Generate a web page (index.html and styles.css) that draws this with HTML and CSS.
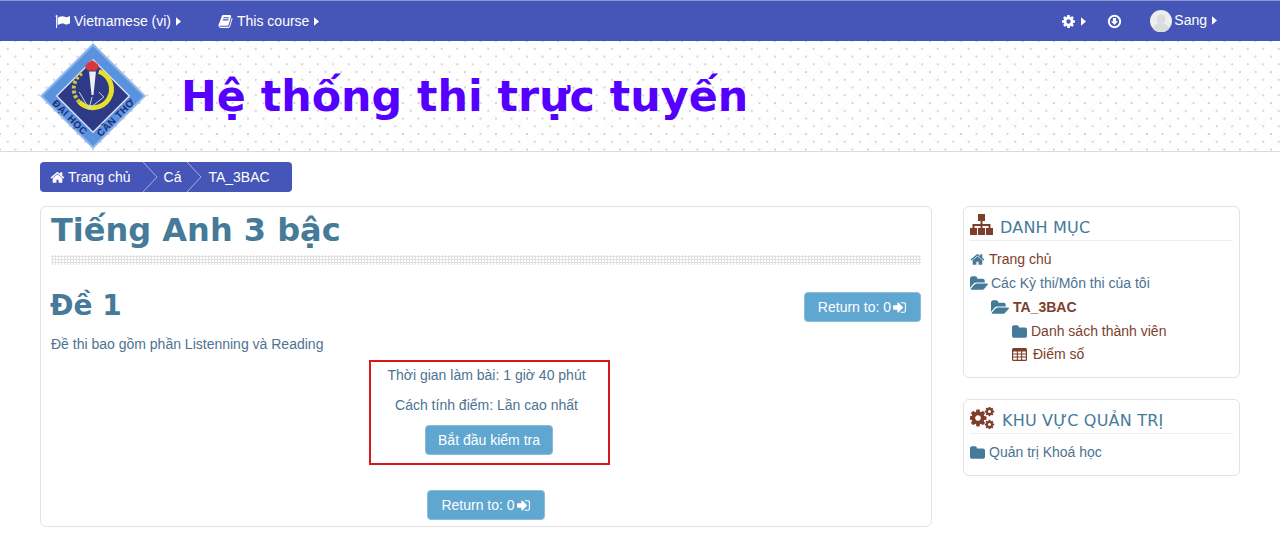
FILE: index.html
```html
<!DOCTYPE html>
<html lang="vi">
<head>
    <meta charset="UTF-8">
    <meta name="viewport" content="width=device-width, initial-scale=1.0">
    <title>Tiếng Anh 3 bậc</title>
    <link rel="stylesheet" href="styles.css">
</head>
<body>
    <svg class="icon-defs" width="0" height="0">
        <defs>
            <symbol id="i-flag" viewBox="0 0 1792 1792"><path d="M320 256q0 72-64 110v1266q0 13-9.500 22.500t-22.500 9.500h-64q-13 0-22.500-9.500t-9.500-22.500v-1266q-64-38-64-110 0-53 37.500-90.500t90.500-37.500 90.500 37.500 37.500 90.500zm1472 64v763q0 25-12.500 38.500t-39.500 27.500q-215 116-369 116-61 0-123.500-22t-108.500-48-115.500-48-142.500-22q-192 0-464 146-17 9-33 9-26 0-45-19t-19-45v-742q0-32 31-55 21-14 79-43 236-120 421-120 107 0 200 29t219 88q38 19 88 19 54 0 117.500-21t110-47 88-47 54.500-21q26 0 45 19t19 45z"/></symbol>
            <symbol id="i-book" viewBox="0 0 1792 1792"><path d="M1703 478q40 57 18 129l-275 906q-19 64-76.500 107.500t-122.500 43.500h-923q-77 0-148.500-53.500t-99.500-131.500q-24-67-2-127 0-4 3-27t4-37q1-8-3-21.500t-3-19.500q2-11 8-21t16.500-23.500 16.500-23.500q23-38 45-91.500t30-91.500q3-10 .5-30t-.5-28q3-11 17-28t17-23q21-36 42-92t25-90q1-9-2.500-32t.5-28q4-13 22-30.500t22-22.500q19-26 42.500-84.500t27.500-96.500q1-8-3-25.500t-2-26.500q2-8 9-18t18-23 17-21q8-12 16.500-30.500t15-35 16-36 19.500-32 26.500-23.500 36-11.500 47.500 5.500l-1 3q38-9 51-9h761q74 0 114 56t18 130l-274 906q-36 119-71.500 153.500t-128.500 34.500h-869q-27 0-38 15-11 16-1 43 24 70 144 70h923q29 0 56-15.500t35-41.500l300-987q7-22 5-57 38 15 59 43zm-1064 2q-4 13 2 22.500t20 9.500h608q13 0 25.500-9.500t16.500-22.500l21-64q4-13-2-22.500t-20-9.500h-608q-13 0-25.500 9.500t-16.500 22.500zm-83 256q-4 13 2 22.500t20 9.500h608q13 0 25.500-9.500t16.500-22.500l21-64q4-13-2-22.500t-20-9.500h-608q-13 0-25.500 9.500t-16.500 22.500z"/></symbol>
            <symbol id="i-caret" viewBox="0 0 6 10"><path d="M0 0l6 5-6 5z"/></symbol>
            <symbol id="i-gear" viewBox="0 0 1792 1792"><path d="M1152 896q0-106-75-181t-181-75-181 75-75 181 75 181 181 75 181-75 75-181zm512-109v222q0 12-8 23t-20 13l-185 28q-19 54-39 91 35 50 107 138 10 12 10 25t-9 23q-27 37-99 108t-94 71q-12 0-26-9l-138-108q-44 23-91 38-16 136-29 186-7 28-36 28h-222q-14 0-24.500-8.500t-11.500-21.500l-28-184q-49-16-90-37l-141 107q-10 9-25 9-14 0-25-11-126-114-165-168-7-10-7-23 0-12 8-23 15-21 51-66.500t54-70.500q-27-50-41-99l-183-27q-13-2-21-12.500t-8-23.500v-222q0-12 8-23t19-13l186-28q14-46 39-92-40-57-107-138-10-12-10-24 0-10 9-23 26-36 98.500-107.500t94.500-71.500q13 0 26 10l138 107q44-23 91-38 16-136 29-186 7-28 36-28h222q14 0 24.500 8.500t11.500 21.500l28 184q49 16 90 37l142-107q9-9 24-9 13 0 25 10 129 119 165 170 7 8 7 22 0 12-8 23-15 21-51 66.500t-54 70.500q26 50 41 98l183 28q13 2 21 12.500t8 23.500z"/></symbol>
            <symbol id="i-home" viewBox="0 0 1792 1792"><path d="M1472 992v480q0 26-19 45t-45 19h-384v-384h-256v384h-384q-26 0-45-19t-19-45v-480q0-1 .5-3t.5-3l575-474 575 474q1 2 1 6zm223-69l-62 74q-8 9-21 11h-3q-13 0-21-7l-692-577-692 577q-12 8-24 7-13-2-21-11l-62-74q-8-10-7-23.500t11-21.500l719-599q32-26 76-26t76 26l244 204v-195q0-14 9-23t23-9h192q14 0 23 9t9 23v408l219 182q10 8 11 21.500t-7 23.500z"/></symbol>
            <symbol id="i-signin" viewBox="0 0 1792 1792"><path d="M1312 896q0 26-19 45l-544 544q-19 19-45 19t-45-19-19-45v-288h-448q-26 0-45-19t-19-45v-384q0-26 19-45t45-19h448v-288q0-26 19-45t45-19 45 19l544 544q19 19 19 45zm352-352v704q0 119-84.500 203.500t-203.500 84.500h-320q-13 0-22.500-9.500t-9.500-22.500q0-4-1-20t-.5-26.500 3-23.500 10-19.500 20.500-6.500h320q66 0 113-47t47-113v-704q0-66-47-113t-113-47h-288l-11.500-1-11.500-3-8-5.500-7-9-2-13.500q0-4-1-20t-.5-26.500 3-23.500 10-19.500 20.500-6.500h320q119 0 203.500 84.500t84.500 203.500z"/></symbol>
            <symbol id="i-folder" viewBox="0 0 1664 1408"><path d="M1664 480v704q0 92-66 158t-158 66h-1216q-92 0-158-66t-66-158v-960q0-92 66-158t158-66h320q92 0 158 66t66 158v32h672q92 0 158 66t66 158z"/></symbol>
            <symbol id="i-folder-open" viewBox="0 0 1879 1408"><path d="M1879 824q0 31-31 66l-336 396q-43 51-120.500 86.500t-143.500 35.500h-1088q-34 0-60.500-13t-26.500-43q0-31 31-66l336-396q43-51 120.500-86.500t143.500-35.500h1088q34 0 60.500 13t26.500 43zm-343-344v160h-832q-94 0-197 47.500t-164 119.500l-337 396-5 6q0-4-.5-12.500t-.500-12.500v-960q0-92 66-158t158-66h320q92 0 158 66t66 158v32h544q92 0 158 66t66 158z"/></symbol>
            <symbol id="i-sitemap" viewBox="0 0 23 21"><path d="M8 0h7v7h-2.500v3h8v4h2.500v7h-7v-7h2.500v-2h-6v2h2.500v7h-7v-7h2.500v-2h-6v2h2.500v7h-7v-7h2.500v-4h8v-3h-2.500z"/></symbol>
            <symbol id="i-table" viewBox="0 0 15 13"><path fill-rule="evenodd" d="M1.500 0h12a1.500 1.500 0 0 1 1.500 1.500v10a1.500 1.500 0 0 1-1.500 1.500h-12a1.500 1.500 0 0 1-1.500-1.500v-10a1.500 1.500 0 0 1 1.500-1.500zm-.3 3.500v2h3.600v-2zm4.700 0v2h3.200v-2zm4.300 0v2h3.600v-2zm-9 3v2h3.600v-2zm4.700 0v2h3.200v-2zm4.300 0v2h3.600v-2zm-9 3v2.300h3.600v-2.300zm4.700 0v2.300h3.200v-2.300zm4.300 0v2.300h3.600v-2.300z"/></symbol>
        </defs>
    </svg>

    <nav class="topbar">
        <div class="topbar-group">
            <a class="top-link"><svg class="icon icon-15"><use href="#i-flag"/></svg>Vietnamese (vi)<svg class="caret"><use href="#i-caret"/></svg></a>
            <a class="top-link"><svg class="icon icon-15"><use href="#i-book"/></svg>This course<svg class="caret"><use href="#i-caret"/></svg></a>
        </div>
        <div class="topbar-group topbar-right">
            <a class="top-link top-gear"><svg class="icon icon-15"><use href="#i-gear"/></svg><svg class="caret"><use href="#i-caret"/></svg></a>
            <a class="top-link top-download">
                <svg class="icon icon-15" viewBox="0 0 14 14"><circle cx="7" cy="7" r="5.300" fill="none" stroke="#fff" stroke-width="1.800"/><path d="M5.500 3.800h3v3h1.800l-3.300 3.400-3.300-3.400h1.800z" fill="#fff"/></svg>
            </a>
            <a class="top-link top-user">
                <svg class="avatar" viewBox="0 0 22 22"><circle cx="11" cy="11" r="11" fill="#eeeeee"/><circle cx="11" cy="9" r="4.500" fill="#dcdcdc"/><path d="M3 19c1-5 5-6 8-6s7 1 8 6a11 11 0 0 1-16 0z" fill="#dcdcdc"/></svg>
                <span class="user-name">Sang<svg class="caret"><use href="#i-caret"/></svg></span>
            </a>
        </div>
    </nav>

    <header class="site-header">
        <svg class="logo" viewBox="0 0 108 108">
            <path d="M54 0l54 54-54 54-54-54z" fill="#8fb6ee"/>
            <path d="M54 3l51 51-51 51-51-51z" fill="#5b92de"/>
            <path d="M54 17l37 37-37 37-37-37z" fill="#2e3a86" stroke="#d5e0f4" stroke-width="1.500"/>
            <path d="M40 60a19 19 0 0 1 4-30" fill="none" stroke="#c9c64a" stroke-width="4" stroke-dasharray="3 2"/>
            <path d="M60 29a19 19 0 1 1-20 31" fill="none" stroke="#e6e02a" stroke-width="5"/>
            <path d="M46 25c0-3 2-3 3-6 1 2 2 0 4-2 1 2 3 2 4 3 2 1 3 3 3 5l-3 3h-8z" fill="#d9363e"/>
            <path d="M50 29h7l-2.500 24h-2z" fill="#eef0f8"/>
            <path d="M40 50l10 17 15-12-5-5M50 67l3-12" fill="none" stroke="#cfd6ee" stroke-width="1"/>
            <text class="logo-text" transform="translate(12 62) rotate(45)">ĐẠI HỌC</text>
            <text class="logo-text" transform="translate(62 96) rotate(-45)">CẦN THƠ</text>
        </svg>
        <div class="site-title">Hệ thống thi trực tuyến</div>
    </header>

    <div class="crumbs">
        <a class="crumb"><svg class="icon crumb-home"><use href="#i-home"/></svg>Trang chủ</a>
        <svg class="crumb-sep" viewBox="0 0 15 30"><path d="M0 0l14 15-14 15" fill="none" stroke="#a7afe0"/></svg>
        <a class="crumb">Cá</a>
        <svg class="crumb-sep" viewBox="0 0 15 30"><path d="M0 0l14 15-14 15" fill="none" stroke="#a7afe0"/></svg>
        <a class="crumb">TA_3BAC</a>
    </div>

    <div class="layout">
        <main class="card main-card">
            <h1 class="course-title">Tiếng Anh 3 bậc</h1>
            <div class="dots"></div>
            <div class="quiz-head">
                <h2 class="quiz-title">Đề 1</h2>
                <a class="button">Return to: 0<svg class="icon icon-15"><use href="#i-signin"/></svg></a>
            </div>
            <p class="intro">Đề thi bao gồm phần Listenning và Reading</p>
            <div class="quiz-box">
                <p>Thời gian làm bài: 1 giờ 40 phút</p>
                <p>Cách tính điểm: Lần cao nhất</p>
                <a class="button button-start">Bắt đầu kiểm tra</a>
            </div>
            <div class="quiz-foot">
                <a class="button">Return to: 0<svg class="icon icon-15"><use href="#i-signin"/></svg></a>
            </div>
        </main>

        <aside class="sidebar">
            <section class="card block">
                <h3 class="block-title"><svg class="icon icon-sitemap"><use href="#i-sitemap"/></svg>DANH MỤC</h3>
                <ul class="tree">
                    <li><svg class="icon icon-home"><use href="#i-home"/></svg><a class="link">Trang chủ</a></li>
                    <li class="tight"><svg class="icon icon-open"><use href="#i-folder-open"/></svg>Các Kỳ thi/Môn thi của tôi</li>
                    <li class="lvl-1"><svg class="icon icon-open"><use href="#i-folder-open"/></svg><a class="link current">TA_3BAC</a></li>
                    <li class="lvl-2"><svg class="icon icon-folder"><use href="#i-folder"/></svg><a class="link">Danh sách thành viên</a></li>
                    <li class="lvl-2 grades"><svg class="icon icon-table"><use href="#i-table"/></svg><a class="link">Điểm số</a></li>
                </ul>
            </section>
            <section class="card block">
                <h3 class="block-title">
                    <svg class="icon icon-cogs" viewBox="0 0 25 22">
                        <use href="#i-gear" x="-2" y="1" width="20" height="20"/>
                        <use href="#i-gear" x="14" y="-1" width="11" height="11"/>
                        <use href="#i-gear" x="14" y="12" width="11" height="11"/>
                    </svg>KHU VỰC QUẢN TRỊ
                </h3>
                <ul class="tree">
                    <li><svg class="icon icon-folder"><use href="#i-folder"/></svg>Quản trị Khoá học</li>
                </ul>
            </section>
        </aside>
    </div>
</body>
</html>
```

FILE: styles.css
```css
body {
    margin: 0;
    font-family: "Liberation Sans", Arial, sans-serif;
    font-size: 14px;
    color: #4d7391;
    background-color: #fff;
}
a {
    color: inherit;
    text-decoration: none;
}
p {
    margin: 0;
}
.icon-defs {
    position: absolute;
}
.icon {
    fill: currentColor;
    flex: none;
}
.icon-15 {
    width: 15px;
    height: 15px;
}
.caret {
    width: 5px;
    height: 9px;
    margin-left: 1px;
    fill: #fff;
}

.topbar {
    display: flex;
    justify-content: space-between;
    height: 40px;
    padding: 0 63px 0 55px;
    background-color: #4656b8;
    border-top: 1px solid #8e97cf;
    color: #fff;
}
.topbar-group {
    display: flex;
    align-items: center;
    gap: 37px;
}
.topbar-right {
    gap: 0;
}
.top-link {
    display: flex;
    align-items: center;
    gap: 4px;
}
.top-download {
    margin-left: 21px;
}
.top-user {
    margin-left: 28px;
    gap: 2px;
}
.user-name {
    display: flex;
    align-items: center;
    gap: 5px;
    margin-top: -2px;
}
.user-name .caret {
    margin-left: 0;
}
.avatar {
    width: 22px;
    height: 22px;
}

.site-header {
    display: flex;
    align-items: center;
    height: 110px;
    padding-left: 40px;
    border-bottom: 1px solid #dcdcdc;
    background-color: #fff;
    background-image:
        radial-gradient(circle, #d4d4d4 0.7px, transparent 1.1px),
        radial-gradient(circle, #d4d4d4 0.7px, transparent 1.1px),
        repeating-linear-gradient(45deg, transparent 0, transparent 10.460px, #f8f8f8 10.460px, #f8f8f8 10.960px),
        repeating-linear-gradient(-45deg, transparent 0, transparent 10.460px, #f8f8f8 10.460px, #f8f8f8 10.960px);
    background-size: 15.500px 15.500px, 15.500px 15.500px, auto, auto;
    background-position: 0 0, 7.750px 7.750px, 0 0, 0 0;
}
.logo {
    width: 106px;
    height: 108px;
}
.logo-text {
    font-family: "Liberation Sans", Arial, sans-serif;
    font-size: 10px;
    font-weight: bold;
    letter-spacing: 0.5px;
    fill: #1d2a78;
}
.site-title {
    margin-left: 35px;
    font-family: "DejaVu Sans", Verdana, sans-serif;
    font-size: 42.800px;
    font-weight: bold;
    color: #5500ff;
}

.crumbs {
    display: flex;
    align-items: center;
    width: 252px;
    height: 30px;
    box-sizing: border-box;
    margin: 10px 0 14px 40px;
    padding-left: 10px;
    background-color: #4656b8;
    border-radius: 4px;
    color: #fff;
}
.crumb {
    display: flex;
    align-items: center;
    gap: 3px;
}
.crumb-home {
    width: 15px;
    height: 15px;
}
.crumb-sep {
    width: 15px;
    height: 30px;
    margin: 0 6px 0 12px;
}
.crumb-sep + .crumb + .crumb-sep {
    margin-left: 6px;
}

.layout {
    display: grid;
    grid-template-columns: 892px 277px;
    gap: 31px;
    padding-left: 40px;
}
.card {
    box-sizing: border-box;
    background-color: #fff;
    border: 1px solid #e3e3e3;
    border-radius: 6px;
}
.main-card {
    height: 321px;
    padding: 0 10px;
}
.course-title {
    margin: 0;
    font-family: "DejaVu Sans", Verdana, sans-serif;
    font-size: 32px;
    font-weight: bold;
    line-height: 46px;
    color: #467a99;
}
.dots {
    height: 10px;
    margin-top: 2px;
    background-image: radial-gradient(circle, #e0e0e0 1px, transparent 1.300px);
    background-size: 3px 3px;
}
.quiz-head {
    display: flex;
    align-items: flex-start;
    justify-content: space-between;
    margin-top: 27px;
}
.quiz-title {
    margin: 0 0 0 -1px;
    font-family: "DejaVu Sans", Verdana, sans-serif;
    font-size: 28px;
    font-weight: bold;
    line-height: 28px;
    color: #467a99;
}
.intro {
    margin-top: 12px;
    line-height: 20px;
}
.button {
    display: inline-flex;
    align-items: center;
    justify-content: center;
    gap: 1px;
    height: 30px;
    box-sizing: border-box;
    padding: 0 13px;
    background-color: #5fa6d0;
    border: 1px solid #8bbdd9;
    border-radius: 4px;
    color: #fff;
}
.quiz-box {
    box-sizing: border-box;
    width: 241px;
    height: 105px;
    margin: 6px 0 0 318px;
    padding: 3px 6px 0 0;
    border: 2px solid #d81818;
    text-align: center;
    line-height: 20px;
}
.quiz-box p {
    margin-bottom: 10px;
}
.quiz-box .button-start {
    margin-left: 5px;
    padding: 0 12px;
}
.quiz-foot {
    margin-top: 25px;
    text-align: center;
}

.sidebar {
    display: flex;
    flex-direction: column;
    gap: 21px;
}
.block {
    padding: 0 6px;
}
.block:first-child {
    height: 172px;
}
.block:last-child {
    height: 77px;
}
.block-title {
    display: flex;
    align-items: center;
    gap: 7px;
    box-sizing: border-box;
    height: 34px;
    margin: 0 0 6px;
    padding-top: 7px;
    border-bottom: 1px solid #eeeeee;
    font-family: "DejaVu Sans", Verdana, sans-serif;
    font-size: 16px;
    font-weight: normal;
    letter-spacing: 0.2px;
    color: #467a99;
}
.block-title .icon {
    margin-top: -5px;
    color: #7d3e2b;
}
.icon-sitemap {
    width: 23px;
    height: 21px;
}
.icon-cogs {
    width: 25px;
    height: 22px;
}
.tree {
    margin: 0;
    padding: 0;
    list-style: none;
}
.tree li {
    display: flex;
    align-items: center;
    gap: 4px;
    height: 24px;
}
.tree .tight {
    gap: 3px;
}
.tree .icon {
    color: #467a99;
}
.icon-home {
    width: 15px;
    height: 15px;
}
.icon-open {
    width: 18px;
    height: 14px;
}
.icon-folder {
    width: 15px;
    height: 13px;
}
.tree .icon-table {
    width: 15px;
    height: 13px;
    color: #7d3e2b;
}
.tree .grades {
    gap: 6px;
    margin-top: -1px;
}
.lvl-1 {
    padding-left: 21px;
}
.lvl-2 {
    padding-left: 42px;
}
.link {
    color: #7d3e2b;
}
.current {
    font-weight: bold;
}
```
